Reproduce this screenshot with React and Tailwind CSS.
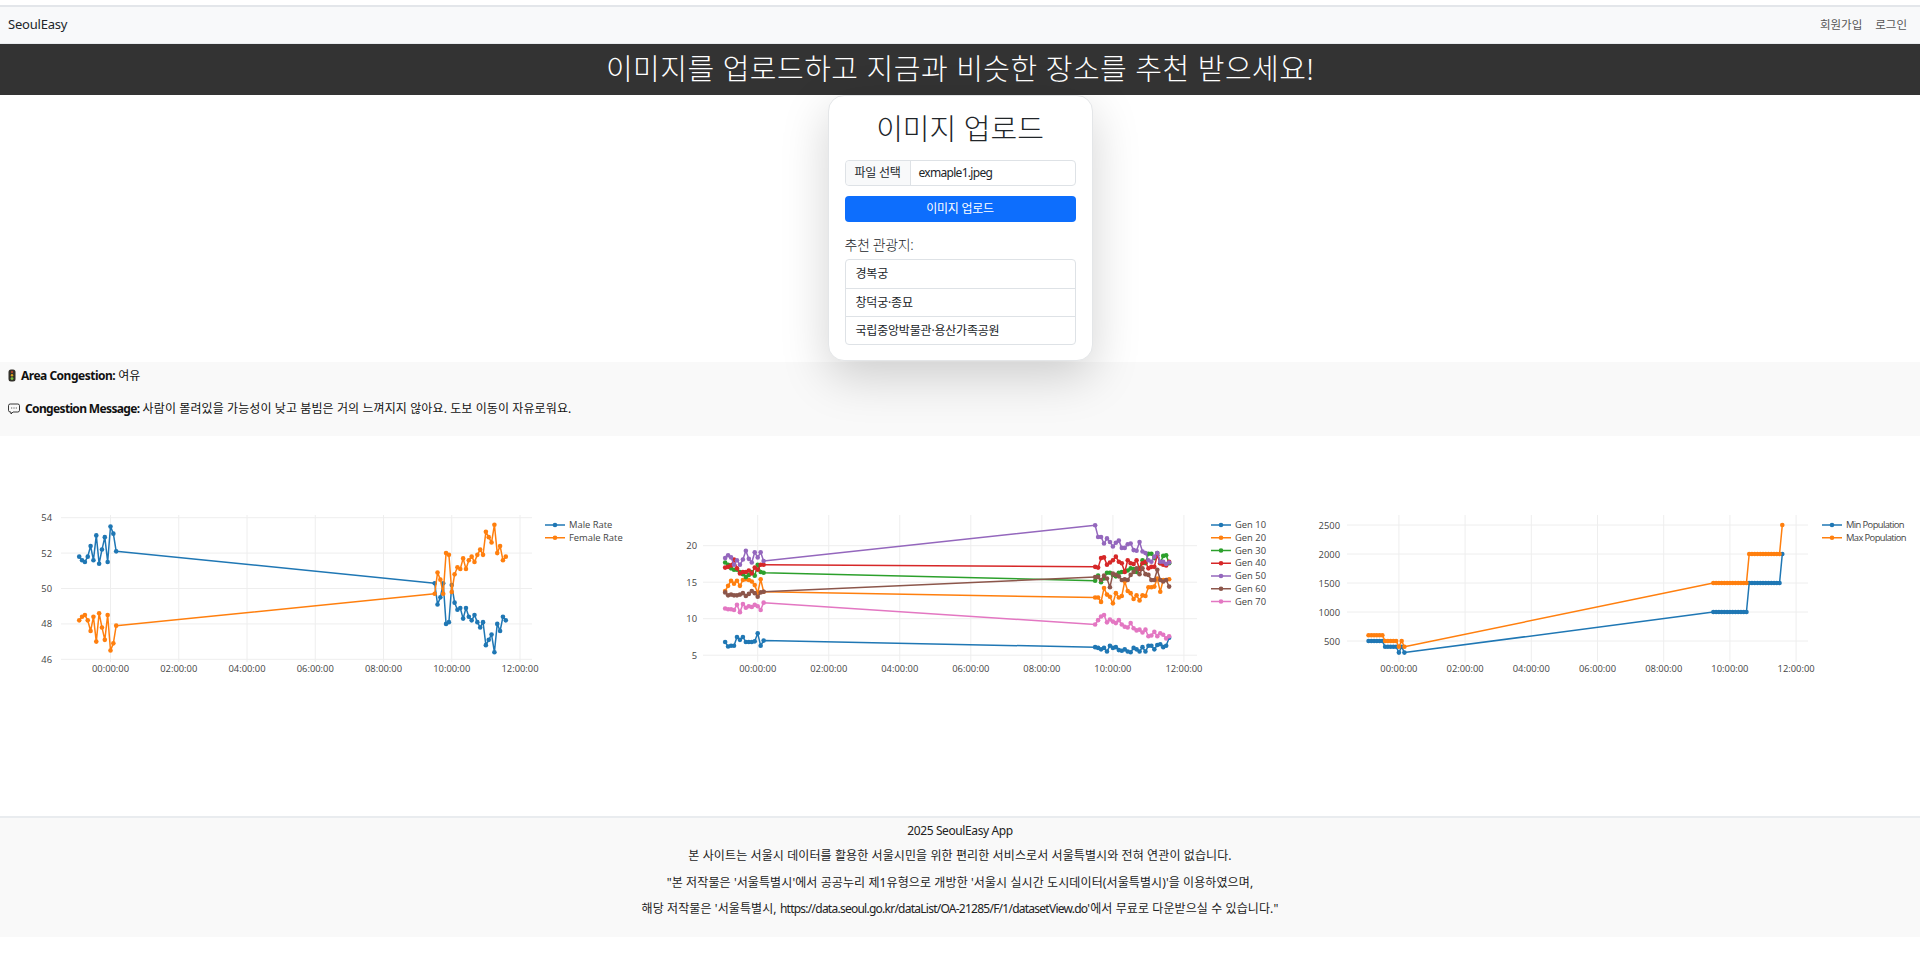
import React from 'react';

// tiempos en minutos desde las 00:00
const range = (from, to) => {
  const out = [];
  for (let t = from; t <= to; t += 5) out.push(t);
  return out;
};
const TIMES = [...range(-55, 10), ...range(570, 695)];

const COLORS = ['#1f77b4', '#ff7f0e', '#2ca02c', '#d62728', '#9467bd', '#8c564b', '#e377c2'];

const male = [
  51.8, 51.6, 51.5, 51.8, 52.4, 51.6, 53.0, 51.4, 52.2, 52.9, 51.5, 53.5, 53.1, 52.1,
  50.3, 49.1, 49.5, 50.3, 48.0, 48.1, 50.2, 49.2, 48.8, 48.9, 48.3, 48.9, 48.4, 48.2, 48.5, 48.1, 47.8, 48.1, 46.8, 47.1, 47.4, 46.4, 48.0, 47.6, 48.4, 48.2,
];

const genSeries = [
  { name: 'Gen 10', values: [6.8, 6.2, 6.3, 6.3, 7.5, 7.1, 7.5, 6.8, 6.8, 6.8, 6.9, 8.0, 6.3, 7.0, 6.1, 6, 5.8, 6, 5.5, 6.3, 6, 6.1, 5.7, 5.6, 5.8, 5.5, 5.4, 6, 5.8, 5.5, 6.1, 5.5, 6.3, 6.3, 5.8, 6.4, 6.5, 6.1, 6.3, 7.4] },
  { name: 'Gen 20', values: [13.8, 14.5, 15.2, 14.8, 15.2, 14.5, 15.3, 15.4, 15.3, 15.1, 14.6, 13.5, 15.4, 13.7, 12.9, 12.9, 12.3, 14.2, 13.3, 13, 12.1, 13.5, 12.9, 13.1, 15.1, 13.8, 13.5, 12.7, 13.2, 12.5, 13.2, 13.1, 14.3, 14.3, 14.4, 15.5, 13.7, 15.3, 15.3, 15.4] },
  { name: 'Gen 30', values: [17.7, 17.4, 16.9, 16.7, 16.7, 16.4, 16.1, 15.7, 16, 16.4, 15.9, 17.4, 16.4, 16.3, 15.2, 15.9, 15, 15.5, 16.3, 16.3, 16, 15.8, 16.3, 16.4, 16.5, 16.6, 16.9, 16.8, 16.4, 16.9, 18, 17.6, 18.9, 18.9, 18.3, 19, 17.6, 18.6, 18.7, 17.6] },
  { name: 'Gen 40', values: [17, 17.1, 17.3, 18.1, 16.9, 16.2, 16.4, 16.4, 16.6, 16.2, 17, 16.7, 17.4, 17.4, 17.1, 17, 18.3, 18.4, 17.4, 17.7, 18, 18.5, 17.8, 17.6, 16.4, 18, 17.6, 17.5, 18, 16.8, 17.6, 17.8, 16.9, 17.1, 17.1, 18.7, 17.6, 17.4, 17.3, 17.8] },
  { name: 'Gen 50', values: [18.3, 18.7, 18.4, 17.4, 18, 17.4, 18.1, 19.3, 18.2, 17.7, 19.1, 18.4, 19.1, 17.9, 22.8, 21.2, 21.2, 20.3, 21, 20.5, 19.9, 20.4, 20.7, 19.7, 19.7, 20.2, 20.3, 19.4, 19.3, 20.5, 19.2, 19, 18, 17.8, 18.5, 19, 17.8, 17.8, 17.5, 17.7] },
  { name: 'Gen 60', values: [13.6, 13.2, 13.3, 13.2, 13.2, 13.3, 13.5, 13.1, 13.4, 13.8, 13.5, 13, 13.6, 13.7, 15.7, 15.7, 15.3, 15.9, 15.5, 14.3, 16.2, 16, 15.8, 15.3, 15.4, 15.3, 16, 16.4, 16.9, 16.1, 16.9, 16.1, 16, 15.3, 15.3, 16.7, 15.3, 15.1, 15.3, 14.4] },
  { name: 'Gen 70', values: [11.4, 11.3, 11.3, 11.2, 11.9, 10.9, 12, 11.5, 11.7, 11.6, 11.9, 11.7, 11.2, 12.2, 9.2, 9.8, 10.3, 10.5, 9.5, 9.9, 9.6, 9.4, 9.8, 9.2, 8.9, 8.8, 9.4, 8.7, 8.4, 8.5, 8.1, 8.5, 7.6, 7.7, 8.2, 7.6, 8, 7.8, 7.3, 7.6] },
];

// 6 + 5 + 3 puntos antes de medianoche, 13 + 12 + 1 en la mañana
const minPop = [
  500, 500, 500, 500, 500, 500, 400, 400, 400, 400, 400, 300, 400, 300,
  ...Array(13).fill(1000), ...Array(12).fill(1500), 2000,
];
const maxPop = [
  600, 600, 600, 600, 600, 600, 500, 500, 500, 500, 500, 400, 500, 400,
  ...Array(13).fill(1500), ...Array(12).fill(2000), 2500,
];

const charts = [
  {
    x00: 110.5, pxPerHour: 34.125, left: 61, right: 532, labelEnd: 52,
    yTicks: [54, 52, 50, 48, 46], y: (v) => 17.7 + (54 - v) * 17.7,
    legendX: 545, legendSpacing: 0,
    series: [
      { name: 'Male Rate', values: male },
      { name: 'Female Rate', values: male.map((v) => 100 - v) },
    ],
  },
  {
    x00: 117.7, pxPerHour: 35.52, left: 63, right: 557, labelEnd: 57,
    yTicks: [20, 15, 10, 5], y: (v) => 45.7 + (20 - v) * 7.3,
    legendX: 571, legendSpacing: 0,
    series: genSeries,
  },
  {
    x00: 118.9, pxPerHour: 33.1, left: 67, right: 528, labelEnd: 60,
    yTicks: [2500, 2000, 1500, 1000, 500], y: (v) => 25 + (2500 - v) * 0.058,
    legendX: 542, legendSpacing: -0.6,
    series: [
      { name: 'Min Population', values: minPop },
      { name: 'Max Population', values: maxPop },
    ],
  },
];

const chartFont = { fontFamily: '"Open Sans", "DejaVu Sans", sans-serif', fontSize: 9.4, fill: '#444' };

const Chart = ({ x00, pxPerHour, left, right, labelEnd, yTicks, y, legendX, legendSpacing, series }) => {
  const x = (t) => x00 + (t / 60) * pxPerHour;
  return (
    <svg width="640" height="190" className="block">
      {[0, 2, 4, 6, 8, 10, 12].map((h) => (
        <g key={h}>
          <line x1={x(h * 60)} x2={x(h * 60)} y1="15" y2="162" stroke="#eeeeee" />
          <text x={x(h * 60)} y="171.5" textAnchor="middle" style={chartFont}>
            {String(h).padStart(2, '0')}:00:00
          </text>
        </g>
      ))}
      {yTicks.map((v) => (
        <g key={v}>
          <line x1={left} x2={right} y1={y(v)} y2={y(v)} stroke="#eeeeee" />
          <text x={labelEnd} y={y(v) + 3.5} textAnchor="end" style={chartFont}>{v}</text>
        </g>
      ))}
      {series.map((s, i) => (
        <g key={s.name}>
          <polyline
            points={s.values.map((v, j) => `${x(TIMES[j])},${y(v)}`).join(' ')}
            fill="none"
            stroke={COLORS[i]}
            strokeWidth="1.5"
            strokeLinejoin="round"
          />
          {s.values.map((v, j) => (
            <circle key={j} cx={x(TIMES[j])} cy={y(v)} r="2.3" fill={COLORS[i]} />
          ))}
        </g>
      ))}
      {series.map((s, i) => {
        const ly = 25 + i * 12.75;
        return (
          <g key={s.name}>
            <line x1={legendX} x2={legendX + 20} y1={ly} y2={ly} stroke={COLORS[i]} strokeWidth="1.5" />
            <circle cx={legendX + 10} cy={ly} r="2.3" fill={COLORS[i]} />
            <text x={legendX + 24} y={ly + 3.2} style={{ ...chartFont, letterSpacing: legendSpacing }}>{s.name}</text>
          </g>
        );
      })}
    </svg>
  );
};

const TrafficLight = () => (
  <svg width="8" height="13" viewBox="0 0 8 13" className="shrink-0">
    <rect x="0.5" y="0.5" width="7" height="12" rx="2.5" fill="#33312a" />
    <circle cx="4" cy="3" r="1.2" fill="#a8452c" />
    <circle cx="4" cy="6.3" r="1.2" fill="#d9a520" />
    <circle cx="4" cy="9.6" r="1.4" fill="#7cc243" />
  </svg>
);

const SpeechBubble = () => (
  <svg width="12" height="12" viewBox="0 0 12 12" fill="none" stroke="#222" strokeWidth="0.9" className="shrink-0">
    <path d="M2.2 1h7.6a1.7 1.7 0 0 1 1.7 1.7v4.6a1.7 1.7 0 0 1-1.7 1.7H5l-2 2V9h-.8A1.7 1.7 0 0 1 .5 7.3V2.7A1.7 1.7 0 0 1 2.2 1z" />
    <path d="M3.2 5h1M5.5 5h1M7.8 5h1" />
  </svg>
);

const places = ['경복궁', '창덕궁·종묘', '국립중앙박물관·용산가족공원'];

const App = () => {
  return (
    <div className="min-h-[956px] bg-white text-[#212529] font-['Noto_Sans','Noto_Sans_CJK_KR',sans-serif]">
      {/* Barra superior */}
      <nav className="mt-[5px] h-[39px] flex items-center justify-between pl-2 pr-[13px] bg-[#f8f9fa] border-t-2 border-[#e3e6ea] border-b border-b-[#e9ecef]">
        <span className="text-[13px] tracking-[-0.2px] text-[#212529]">SeoulEasy</span>
        <div className="flex gap-[13px] text-[11.5px] text-[#555]">
          <span>회원가입</span>
          <span>로그인</span>
        </div>
      </nav>

      <div className="h-[51px] pb-[2px] flex items-center justify-center bg-[#333] text-white text-[29px] font-light tracking-[0.5px]">
        이미지를 업로드하고 지금과 비슷한 장소를 추천 받으세요!
      </div>

      {/* Tarjeta de subida */}
      <div className="relative z-10 h-[267px] flex justify-center bg-white">
        <div className="w-[265px] h-[266px] px-4 pt-[9px] bg-white border border-[#e4e6e8] rounded-2xl shadow-[0_16px_48px_rgba(0,0,0,0.175)]">
          <h2 className="h-[47px] text-center text-[29px] leading-[47px] font-light text-[#212529]">이미지 업로드</h2>
          <div className="mt-[8px] h-[26px] flex items-center border border-[#dee2e6] rounded text-[12px]">
            <span className="w-[65px] h-full flex items-center justify-center bg-[#f8f9fa] border-r border-[#dee2e6] rounded-l tracking-[-0.3px]">파일 선택</span>
            <span className="pl-[8px] tracking-[-0.7px] text-[#212529]">exmaple1.jpeg</span>
          </div>
          <button className="mt-[10px] w-full h-[26px] bg-[#0d6efd] rounded text-white text-[12px] tracking-[-0.3px]">이미지 업로드</button>
          <p className="mt-[13px] h-5 leading-5 text-[14px] font-light tracking-[-0.4px]">추천 관광지:</p>
          <ul className="mt-[4px] border border-[#dee2e6] rounded text-[12px] tracking-[-0.2px]">
            {places.map((p, i) => (
              <li key={p} className={`h-[28px] leading-[27px] pl-[10px] ${i > 0 ? 'border-t border-[#dee2e6]' : ''}`}>{p}</li>
            ))}
          </ul>
        </div>
      </div>

      {/* Estado de congestión */}
      <section className="h-[74px] px-2 pt-[5px] bg-[#f9f9f9] text-[12px] text-[#111]">
        <p className="h-[17px] flex items-center gap-[5px]">
          <TrafficLight />
          <span><b className="font-bold tracking-[-0.5px]">Area Congestion:</b> 여유</span>
        </p>
        <p className="mt-[16px] h-[17px] flex items-center gap-[5px]">
          <SpeechBubble />
          <span><b className="font-bold tracking-[-0.65px]">Congestion Message:</b> <span className="tracking-[0.1px]">사람이 몰려있을 가능성이 낮고 붐빔은 거의 느껴지지 않아요. 도보 이동이 자유로워요.</span></span>
        </p>
      </section>

      {/* Gráficas */}
      <section className="h-[380px] pt-[64px] grid grid-cols-3">
        {charts.map((c, i) => (
          <Chart key={i} {...c} />
        ))}
      </section>

      <footer className="h-[121px] bg-[#f9f9f9] border-t-2 border-[#e9ecef] text-center text-[12px] text-[#222] tracking-[0.1px]">
        <p className="h-[25px] leading-[25px] tracking-[-0.4px]">2025 SeoulEasy App</p>
        <p className="h-[26.7px] leading-[26.7px]">본 사이트는 서울시 데이터를 활용한 서울시민을 위한 편리한 서비스로서 서울특별시와 전혀 연관이 없습니다.</p>
        <p className="h-[26.7px] leading-[26.7px]">"본 저작물은 '서울특별시'에서 공공누리 제1유형으로 개방한 '서울시 실시간 도시데이터(서울특별시)'을 이용하였으며,</p>
        <p className="h-[26.7px] leading-[26.7px]">해당 저작물은 '서울특별시, <span className="tracking-[-0.75px]">https://data.seoul.go.kr/dataList/OA-21285/F/1/datasetView.do</span>'에서 무료로 다운받으실 수 있습니다."</p>
      </footer>
    </div>
  );
};

export default App;
